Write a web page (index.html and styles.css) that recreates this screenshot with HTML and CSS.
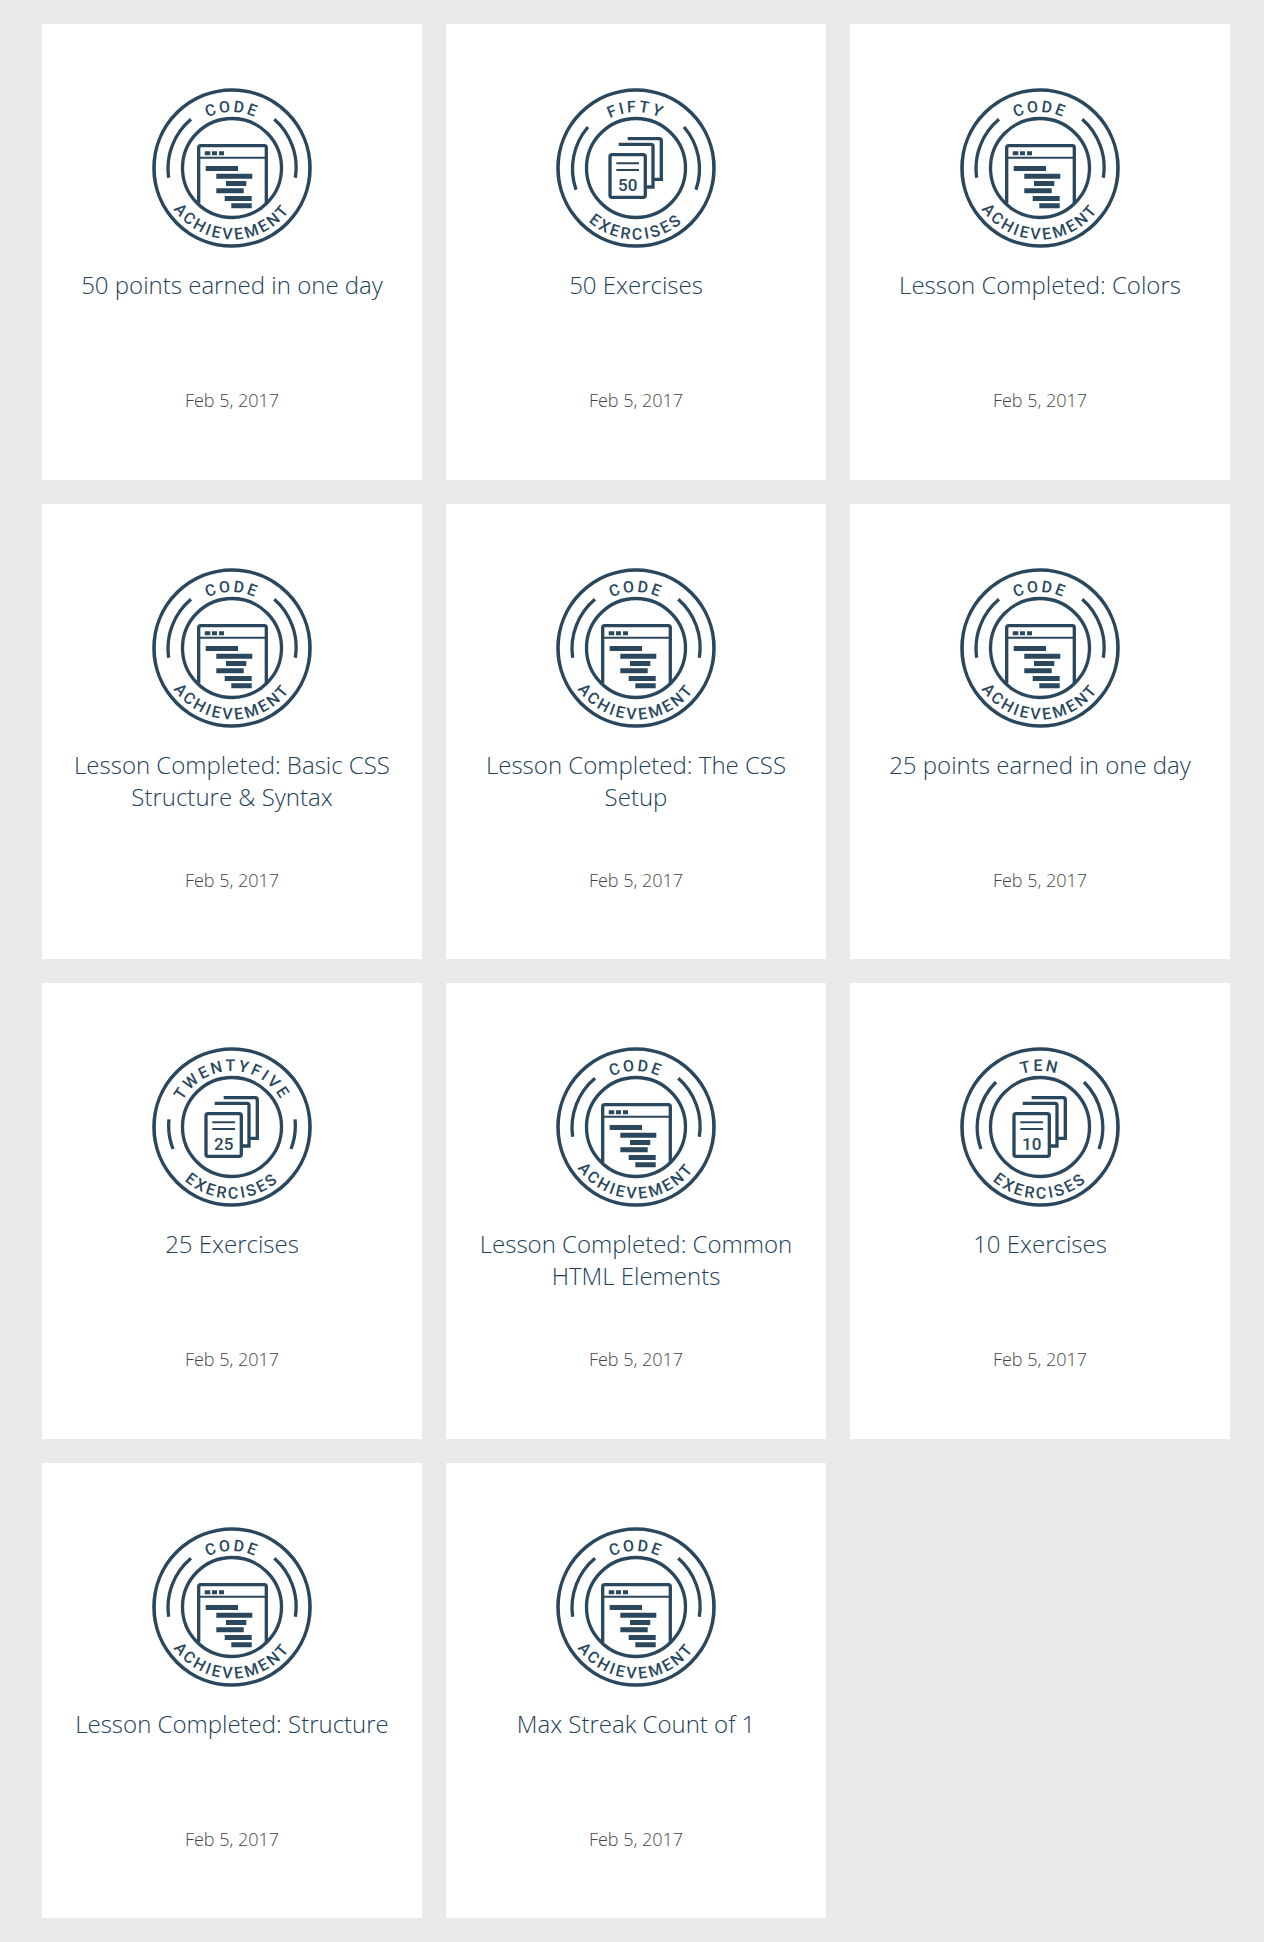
FILE: index.html
```html
<!DOCTYPE html>
<html lang="en">
<head>
    <meta charset="UTF-8">
    <meta name="viewport" content="width=device-width, initial-scale=1.0">
    <title>Achievements</title>
    <link rel="stylesheet" href="styles.css">
</head>
<body>
    <div class="grid">
        <div class="card">
            <svg class="badge" viewBox="0 0 160 160">
                <defs>
                    <path id="arc-top" d="M24 80a56 56 0 0 1 112 0"/>
                    <path id="arc-bottom" d="M8.500 80a71.500 71.500 0 0 0 143 0"/>
                    <g id="ring">
                        <circle class="line-thick" cx="80" cy="80" r="78"/>
                        <circle class="line" cx="80" cy="80" r="49.500"/>
                    </g>
                    <g id="code-art">
                        <path class="line" d="M16.700 89.700A64 64 0 0 1 39 31.300M143.300 89.700A64 64 0 0 0 122.300 31.300"/>
                        <path class="line" d="M46.700 115V59.700a2 2 0 0 1 2-2H112.300a2 2 0 0 1 2 2V115"/>
                        <path class="line-thin" d="M46.700 69.700H114.300"/>
                        <path class="fill" d="M52.700 63.300h5.600v4h-5.600zM60 63.300h5v4h-5zM67 63.300h5v4h-5z"/>
                        <path class="fill" d="M53.700 78H86v5H53.700zM64.300 85.700h36v5h-36zM74 93h20.300v5H74zM64.300 100.300h27.400v5H64.300zM72.700 108h27v5h-27zM79.300 115.300h20.400v5H79.300z"/>
                    </g>
                    <g id="papers">
                        <rect class="line" x="54" y="66.700" width="35.300" height="42.600" rx="2"/>
                        <path class="line" d="M62.700 56.300H95a2 2 0 0 1 2 2V99H91"/>
                        <path class="line" d="M71.700 50.700H103.300a2 2 0 0 1 2 2V91.300H97"/>
                        <path class="line-thin" d="M60.300 75.300H83M60.300 82H83"/>
                    </g>
                </defs>
                <use href="#ring"/>
                <use href="#code-art"/>
                <text class="badge-text"><textPath href="#arc-top" startOffset="50%">CODE</textPath></text>
                <text class="badge-text"><textPath href="#arc-bottom" startOffset="50%">ACHIEVEMENT</textPath></text>
            </svg>
            <div class="name">50 points earned in one day</div>
            <div class="date">Feb 5, 2017</div>
        </div>
        <div class="card">
            <svg class="badge" viewBox="0 0 160 160">
                <use href="#ring"/>
                <use href="#papers"/>
                <path class="line" d="M20 101.700A64 64 0 0 1 32 39M140 101.700A64 64 0 0 0 128 39"/>
                <text class="paper-num" x="71.700" y="102.500">50</text>
                <text class="badge-text"><textPath href="#arc-top" startOffset="50%">FIFTY</textPath></text>
                <text class="badge-text"><textPath href="#arc-bottom" startOffset="50%">EXERCISES</textPath></text>
            </svg>
            <div class="name">50 Exercises</div>
            <div class="date">Feb 5, 2017</div>
        </div>
        <div class="card">
            <svg class="badge" viewBox="0 0 160 160">
                <use href="#ring"/>
                <use href="#code-art"/>
                <text class="badge-text"><textPath href="#arc-top" startOffset="50%">CODE</textPath></text>
                <text class="badge-text"><textPath href="#arc-bottom" startOffset="50%">ACHIEVEMENT</textPath></text>
            </svg>
            <div class="name">Lesson Completed: Colors</div>
            <div class="date">Feb 5, 2017</div>
        </div>
        <div class="card">
            <svg class="badge" viewBox="0 0 160 160">
                <use href="#ring"/>
                <use href="#code-art"/>
                <text class="badge-text"><textPath href="#arc-top" startOffset="50%">CODE</textPath></text>
                <text class="badge-text"><textPath href="#arc-bottom" startOffset="50%">ACHIEVEMENT</textPath></text>
            </svg>
            <div class="name">Lesson Completed: Basic CSS Structure &amp; Syntax</div>
            <div class="date">Feb 5, 2017</div>
        </div>
        <div class="card">
            <svg class="badge" viewBox="0 0 160 160">
                <use href="#ring"/>
                <use href="#code-art"/>
                <text class="badge-text"><textPath href="#arc-top" startOffset="50%">CODE</textPath></text>
                <text class="badge-text"><textPath href="#arc-bottom" startOffset="50%">ACHIEVEMENT</textPath></text>
            </svg>
            <div class="name">Lesson Completed: The CSS Setup</div>
            <div class="date">Feb 5, 2017</div>
        </div>
        <div class="card">
            <svg class="badge" viewBox="0 0 160 160">
                <use href="#ring"/>
                <use href="#code-art"/>
                <text class="badge-text"><textPath href="#arc-top" startOffset="50%">CODE</textPath></text>
                <text class="badge-text"><textPath href="#arc-bottom" startOffset="50%">ACHIEVEMENT</textPath></text>
            </svg>
            <div class="name">25 points earned in one day</div>
            <div class="date">Feb 5, 2017</div>
        </div>
        <div class="card">
            <svg class="badge" viewBox="0 0 160 160">
                <use href="#ring"/>
                <use href="#papers"/>
                <path class="line" d="M21 102A64 64 0 0 1 17 72.300M139 102A64 64 0 0 0 143 72.300"/>
                <text class="paper-num" x="71.700" y="102.500">25</text>
                <text class="badge-text"><textPath href="#arc-top" startOffset="50%">TWENTYFIVE</textPath></text>
                <text class="badge-text"><textPath href="#arc-bottom" startOffset="50%">EXERCISES</textPath></text>
            </svg>
            <div class="name">25 Exercises</div>
            <div class="date">Feb 5, 2017</div>
        </div>
        <div class="card">
            <svg class="badge" viewBox="0 0 160 160">
                <use href="#ring"/>
                <use href="#code-art"/>
                <text class="badge-text"><textPath href="#arc-top" startOffset="50%">CODE</textPath></text>
                <text class="badge-text"><textPath href="#arc-bottom" startOffset="50%">ACHIEVEMENT</textPath></text>
            </svg>
            <div class="name">Lesson Completed: Common HTML Elements</div>
            <div class="date">Feb 5, 2017</div>
        </div>
        <div class="card">
            <svg class="badge" viewBox="0 0 160 160">
                <use href="#ring"/>
                <use href="#papers"/>
                <path class="line" d="M21 102A64 64 0 0 1 36 35M139 102A64 64 0 0 0 124 35"/>
                <text class="paper-num" x="71.700" y="102.500">10</text>
                <text class="badge-text"><textPath href="#arc-top" startOffset="50%">TEN</textPath></text>
                <text class="badge-text"><textPath href="#arc-bottom" startOffset="50%">EXERCISES</textPath></text>
            </svg>
            <div class="name">10 Exercises</div>
            <div class="date">Feb 5, 2017</div>
        </div>
        <div class="card">
            <svg class="badge" viewBox="0 0 160 160">
                <use href="#ring"/>
                <use href="#code-art"/>
                <text class="badge-text"><textPath href="#arc-top" startOffset="50%">CODE</textPath></text>
                <text class="badge-text"><textPath href="#arc-bottom" startOffset="50%">ACHIEVEMENT</textPath></text>
            </svg>
            <div class="name">Lesson Completed: Structure</div>
            <div class="date">Feb 5, 2017</div>
        </div>
        <div class="card">
            <svg class="badge" viewBox="0 0 160 160">
                <use href="#ring"/>
                <use href="#code-art"/>
                <text class="badge-text"><textPath href="#arc-top" startOffset="50%">CODE</textPath></text>
                <text class="badge-text"><textPath href="#arc-bottom" startOffset="50%">ACHIEVEMENT</textPath></text>
            </svg>
            <div class="name">Max Streak Count of 1</div>
            <div class="date">Feb 5, 2017</div>
        </div>
    </div>
</body>
</html>
```

FILE: styles.css
```css
* {
    margin: 0;
    box-sizing: border-box;
}

body {
    background-color: #e9ebea;
    font-family: "Open Sans", sans-serif;
}

.grid {
    display: grid;
    grid-template-columns: repeat(3, 380px);
    grid-auto-rows: 455.5px;
    gap: 24px;
    padding: 24px 42px;
}

.card {
    display: flex;
    flex-direction: column;
    align-items: center;
    padding: 64px 30px 0;
    background-color: white;
    text-align: center;
}

.badge {
    flex: none;
    width: 160px;
    height: 160px;
}

.name {
    height: 64px;
    margin-top: 21px;
    color: #22405a;
    font-size: 24px;
    font-weight: 300;
    line-height: 32px;
}

.date {
    margin-top: 52px;
    color: #444;
    font-size: 18px;
    font-weight: 300;
    line-height: 30px;
}

.line,
.line-thick,
.line-thin {
    fill: none;
    stroke: #2a475e;
}

.line {
    stroke-width: 3.300;
}

.line-thick {
    stroke-width: 3.600;
}

.line-thin {
    stroke-width: 2;
}

.fill {
    fill: #2a475e;
}

.badge-text {
    fill: #2a475e;
    font-family: Roboto, sans-serif;
    font-size: 16px;
    font-weight: 500;
    letter-spacing: 2.500px;
    text-anchor: middle;
}

.paper-num {
    fill: #2a475e;
    font-family: Roboto, sans-serif;
    font-size: 17px;
    font-weight: 500;
    text-anchor: middle;
}
```
